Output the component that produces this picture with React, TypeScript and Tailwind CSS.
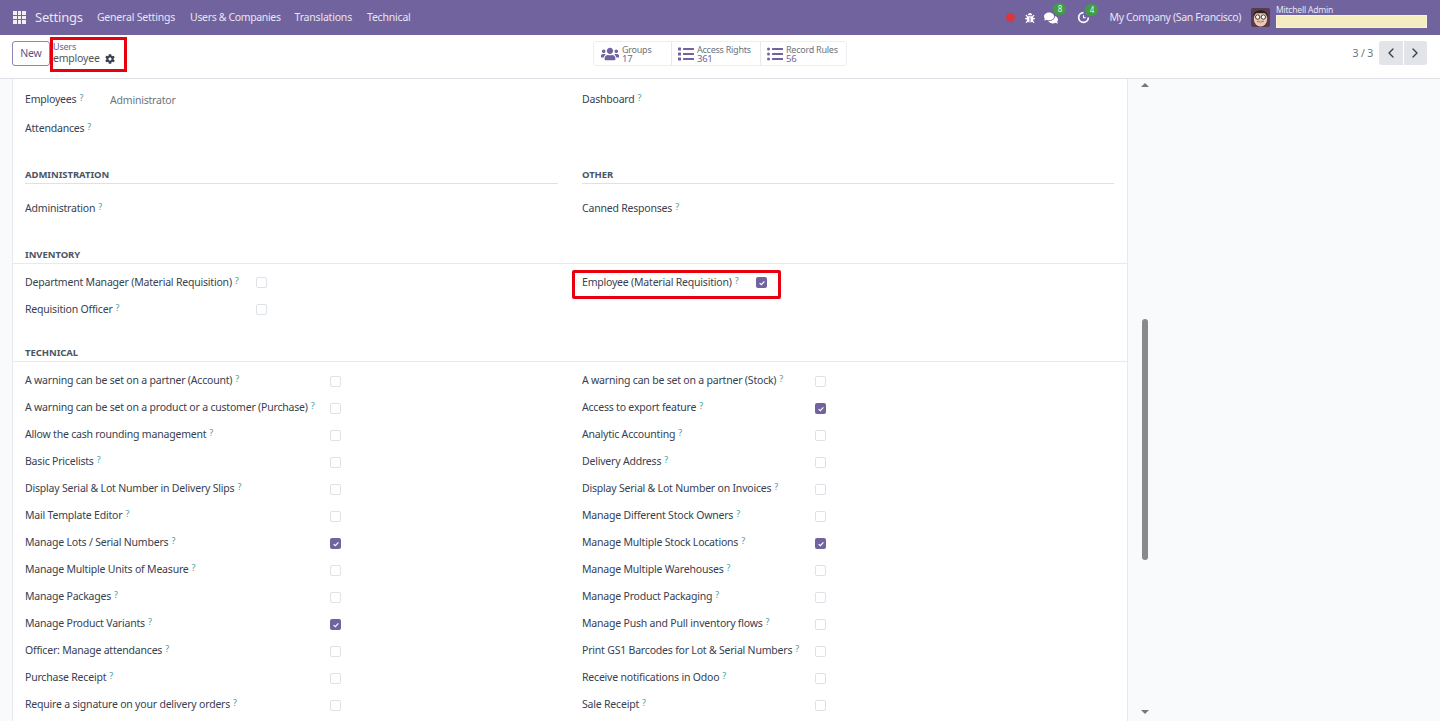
import React from 'react';
import { ChevronLeft, ChevronRight } from 'lucide-react';
import { FaBug, FaCog, FaComments, FaList, FaListUl, FaUsers } from 'react-icons/fa';

// [label, checked] pairs for the Technical block
const TECH_LEFT: [string, boolean][] = [
  ['A warning can be set on a partner (Account)', false],
  ['A warning can be set on a product or a customer (Purchase)', false],
  ['Allow the cash rounding management', false],
  ['Basic Pricelists', false],
  ['Display Serial & Lot Number in Delivery Slips', false],
  ['Mail Template Editor', false],
  ['Manage Lots / Serial Numbers', true],
  ['Manage Multiple Units of Measure', false],
  ['Manage Packages', false],
  ['Manage Product Variants', true],
  ['Officer: Manage attendances', false],
  ['Purchase Receipt', false],
  ['Require a signature on your delivery orders', false],
];

const TECH_RIGHT: [string, boolean][] = [
  ['A warning can be set on a partner (Stock)', false],
  ['Access to export feature', true],
  ['Analytic Accounting', false],
  ['Delivery Address', false],
  ['Display Serial & Lot Number on Invoices', false],
  ['Manage Different Stock Owners', false],
  ['Manage Multiple Stock Locations', true],
  ['Manage Multiple Warehouses', false],
  ['Manage Product Packaging', false],
  ['Manage Push and Pull inventory flows', false],
  ['Print GS1 Barcodes for Lot & Serial Numbers', false],
  ['Receive notifications in Odoo', false],
  ['Sale Receipt', false],
];

function Help() {
  return <sup className="ml-[3px] text-[9px] leading-none text-[#3f9ea8] relative -top-[2px]">?</sup>;
}

function Check({ on }: { on: boolean }) {
  if (on) {
    return (
      <span className="w-[11px] h-[11px] rounded-[2px] bg-[#71639e] flex items-center justify-center shrink-0">
        <svg viewBox="0 0 10 10" className="w-[8px] h-[8px]">
          <path d="M2 5.2 L4.2 7.2 L8 3" fill="none" stroke="white" strokeWidth="1.5" />
        </svg>
      </span>
    );
  }
  return <span className="w-[11px] h-[11px] rounded-[2px] border border-[#dee2e6] bg-white shrink-0" />;
}

function Row({ label, on, width, lift }: { label: string; on: boolean; width: string; lift?: boolean }) {
  return (
    <div className="h-[27px] flex items-center">
      <div className={`${width} shrink-0 whitespace-nowrap ${lift ? '-mt-[2px]' : ''}`}>
        {label}
        <Help />
      </div>
      <Check on={on} />
    </div>
  );
}

function SectionHead({ title }: { title: string }) {
  return <div className="text-[9.5px] leading-[12px] font-bold text-[#4b5563] tracking-[-0.05px]">{title}</div>;
}

function Stat({ icon, label, count, border, iconBox }: { icon: React.ReactNode; label: string; count: string; border?: boolean; iconBox: string }) {
  return (
    <div className={`h-full flex items-center gap-[3px] ${border ? 'border-l border-[#e7e9ed] pl-[6px]' : 'pl-[7px]'}`}>
      <span className={`text-[#71639e] flex justify-center ${iconBox}`}>{icon}</span>
      <div className="text-[9px] leading-[9px] text-[#6c757d] whitespace-nowrap tracking-[-0.25px]">
        <div>{label}</div>
        <div className="text-[#71639e] text-[9.5px]">{count}</div>
      </div>
    </div>
  );
}

export default function App() {
  return (
    <div className="h-[721px] w-[1440px] overflow-hidden flex flex-col bg-white text-[10.5px] tracking-[-0.2px] text-[#374151] font-['Noto_Sans',sans-serif]">
      {/* Navbar */}
      <div className="h-[35px] shrink-0 bg-[#71639e] flex items-center pl-[13px] pr-[13px] text-[#e9e5f2]">
        <div className="grid grid-cols-3 gap-[1px] w-[13px] h-[13px]">
          {[0, 1, 2, 3, 4, 5, 6, 7, 8].map(i => (
            <span key={i} className="bg-white/90" />
          ))}
        </div>
        <span className="ml-[9px] text-[13px] tracking-[-0.2px]">Settings</span>
        <span className="ml-[14px]">General Settings</span>
        <span className="ml-[15px] tracking-[-0.35px]">Users &amp; Companies</span>
        <span className="ml-[14px]">Translations</span>
        <span className="ml-[15px]">Technical</span>

        <span className="ml-auto w-[9px] h-[9px] rounded-full bg-[#d9363e]" />
        <FaBug className="ml-[10px] text-white" size={10} />
        <span className="ml-[9px] relative">
          <FaComments className="text-white" size={14} />
          <span className="absolute -top-[8px] left-[9px] w-[13px] h-[12px] rounded-full bg-[#3f9e43] text-[8px] leading-[12px] text-center text-white/90">8</span>
        </span>
        <span className="ml-[19px] relative">
          <svg viewBox="0 0 14 14" className="w-[13px] h-[13px]">
            <path d="M7 1.8 A5.2 5.2 0 1 0 12.2 7" fill="none" stroke="white" strokeWidth="1.8" />
            <path d="M7 4.5 V7.2 H9.5" fill="none" stroke="white" strokeWidth="1.2" />
          </svg>
          <span className="absolute -top-[7px] left-[8px] w-[13px] h-[12px] rounded-full bg-[#3f9e43] text-[8px] leading-[12px] text-center text-white/90">4</span>
        </span>
        <span className="ml-[19px] whitespace-nowrap tracking-[-0.35px]">My Company (San Francisco)</span>
        <svg viewBox="0 0 20 20" className="ml-[10px] w-[19px] h-[19px] rounded-[2px]">
          <rect width="20" height="20" fill="#5a3a4e" />
          <ellipse cx="10" cy="11.5" rx="7" ry="8" fill="#eecbb0" />
          <path d="M2.5 9 C2 0 18 0 17.5 9 L15 5.5 H5 Z" fill="#2b211e" />
          <circle cx="7" cy="9.5" r="2.3" fill="#fff" stroke="#222" strokeWidth="0.9" />
          <circle cx="13" cy="9.5" r="2.3" fill="#fff" stroke="#222" strokeWidth="0.9" />
          <path d="M6.5 14 Q10 17 13.5 14 Z" fill="white" stroke="#7a3b30" strokeWidth="0.5" />
        </svg>
        <div className="ml-[6px] w-[151px] flex flex-col">
          <span className="text-[8.5px] leading-[8px] mb-[1px] -mt-[2px]">Mitchell Admin</span>
          <span className="h-[13px] bg-[#f6ecc2] border border-white/40" />
        </div>
      </div>

      {/* Control panel */}
      <div className="h-[44px] shrink-0 border-b border-[#dee2e6] flex items-start pt-[6px] pl-[12px] pr-[13px] relative">
        <button className="h-[25px] w-[38px] border border-[#8f84b5] rounded-[3px] text-[10.5px] text-[#5f5586]">New</button>
        <div className="ml-[3px] w-[88px] text-[#6c6490]">
          <div className="text-[9px] leading-[11px]">Users</div>
          <div className="flex items-center gap-[5px] text-[10.5px] leading-[13px] text-[#555]">
            employee <FaCog className="text-[#374151]" size={10} />
          </div>
        </div>
        <div className="ml-[452px] h-[25px] w-[254px] flex border border-[#eceef1] rounded-[3px]">
          <div className="w-[77px]"><Stat iconBox="w-[18px]" icon={<FaUsers size={18} />} label="Groups" count="17" /></div>
          <div className="w-[89px]"><Stat border iconBox="w-[16px]" icon={<FaList size={16} />} label="Access Rights" count="361" /></div>
          <div className="w-[86px]"><Stat border iconBox="w-[16px]" icon={<FaListUl size={16} />} label="Record Rules" count="56" /></div>
        </div>
        <span className="ml-auto mt-[5px] text-[#6c757d] text-[10.5px]">3 / 3</span>
        <div className="ml-[6px] flex h-[24px] gap-[1px]">
          <span className="w-[23.5px] bg-[#e2e4e8] rounded-l-[3px] flex items-center justify-center"><ChevronLeft size={16} color="#374151" /></span>
          <span className="w-[23.5px] bg-[#e2e4e8] rounded-r-[3px] flex items-center justify-center"><ChevronRight size={16} color="#374151" /></span>
        </div>
        {/* red annotation */}
        <div className="absolute left-[50px] top-[2px] w-[77px] h-[35px] border-[3px] border-[#e8000f]" />
      </div>

      {/* Content */}
      <div className="flex-1 min-h-0 flex bg-[#f9fafb]">
        <div className="w-[12px] shrink-0" />
        <div className="w-[1116px] shrink-0 bg-white border-x border-[#e7e9ed] relative overflow-hidden">
          <div className="grid grid-cols-[545px_1fr] pl-[12px] pt-[6px] h-[90px]">
            <div>
              <div className="h-[29px] flex items-center">
                <div className="w-[85px]">Employees<Help /></div>
                <span className="text-[#6c757d] mt-[2px]">Administrator</span>
              </div>
              <div className="h-[29px] flex items-center">Attendances<Help /></div>
            </div>
            <div className="pl-[12px]">
              <div className="h-[29px] flex items-center">Dashboard<Help /></div>
            </div>
          </div>

          <div className="grid grid-cols-[545px_1fr] pl-[12px] h-[80px]">
            <div className="pr-[12px]">
              <div className="border-b border-[#dee2e6] pb-[2px]"><SectionHead title="ADMINISTRATION" /></div>
              <div className="mt-[17px]">Administration<Help /></div>
            </div>
            <div className="pl-[12px] pr-[13px]">
              <div className="border-b border-[#dee2e6] pb-[2px]"><SectionHead title="OTHER" /></div>
              <div className="mt-[17px]">Canned Responses<Help /></div>
            </div>
          </div>

          <div className="pl-[12px] pb-[2px] border-b border-[#e7e9ed]"><SectionHead title="INVENTORY" /></div>
          <div className="grid grid-cols-[545px_1fr] pl-[12px] pt-[5px] h-[83px]">
            <div>
              <Row label="Department Manager (Material Requisition)" on={false} width="w-[231px]" />
              <Row label="Requisition Officer" on={false} width="w-[231px]" />
            </div>
            <div className="pl-[12px]">
              <Row label="Employee (Material Requisition)" on={true} width="w-[174px]" />
            </div>
          </div>

          <div className="pl-[12px] pb-[2px] border-b border-[#e7e9ed]"><SectionHead title="TECHNICAL" /></div>
          <div className="grid grid-cols-[545px_1fr] pl-[12px] pt-[6px]">
            <div>
              {TECH_LEFT.map(([label, on]) => (
                <Row key={label} lift label={label} on={on} width="w-[305px]" />
              ))}
            </div>
            <div className="pl-[12px]">
              {TECH_RIGHT.map(([label, on]) => (
                <Row key={label} lift label={label} on={on} width="w-[233px]" />
              ))}
            </div>
          </div>

          {/* red annotation */}
          <div className="absolute left-[559px] top-[191px] w-[209px] h-[29px] border-[3px] rounded-[2px] border-[#e8000f]" />
        </div>

        {/* scrollbar track */}
        <div className="ml-[14px] w-[6px] h-full flex flex-col items-center">
          <span className="mt-[4px] w-0 h-0 border-x-[4px] border-x-transparent border-b-[4px] border-b-[#777]" />
          <span className="mt-[232px] w-[6px] h-[241px] rounded-full bg-[#8a8a8a]" />
          <span className="mt-[150px] w-0 h-0 border-x-[4px] border-x-transparent border-t-[4px] border-t-[#777]" />
        </div>
      </div>
    </div>
  );
}
